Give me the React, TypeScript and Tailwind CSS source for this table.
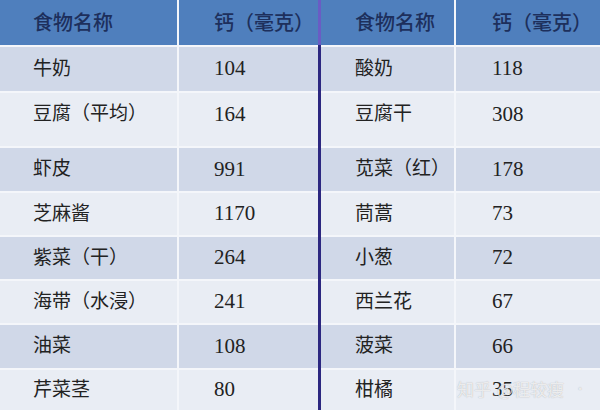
import React from 'react';

const rows: [string, string, string, string, number][] = [
  ['牛奶', '104', '酸奶', '118', 44],
  ['豆腐（平均）', '164', '豆腐干', '308', 53],
  ['虾皮', '991', '苋菜（红）', '178', 43],
  ['芝麻酱', '1170', '茼蒿', '73', 42],
  ['紫菜（干）', '264', '小葱', '72', 42],
  ['海带（水浸）', '241', '西兰花', '67', 42],
  ['油菜', '108', '菠菜', '66', 43],
  ['芹菜茎', '80', '柑橘', '35', 40],
];

const font = { fontFamily: '"Liberation Serif", "Noto Sans CJK SC", serif' };

const Table = ({ side, firstW, padA, padB }: { side: 0 | 1; firstW: string; padA: string; padB: string }) => (
  <div className="flex flex-col gap-y-[2px] bg-[#f4f6fa] flex-1">
    <div className={`grid ${firstW} gap-x-[2px] h-[45px]`}>
      <div className={`bg-[#4f7fbd] flex items-center ${padA} text-[20px] text-[#1d2f5c] font-medium`}>食物名称</div>
      <div className={`bg-[#4f7fbd] flex items-center ${padB} text-[20px] text-[#1d2f5c] font-medium`}>钙（毫克）</div>
    </div>
    {rows.map((r, i) => {
      const bg = i % 2 === 0 ? 'bg-[#d0d8e8]' : 'bg-[#e9edf4]';
      return (
        <div key={i} className={`grid ${firstW} gap-x-[2px]`} style={{ height: r[4] }}>
          <div className={`${bg} flex items-center ${padA} text-[19px] text-[#222]`}>
            <span className={i === 1 ? 'mb-[10px]' : ''}>{side === 0 ? r[0] : r[2]}</span>
          </div>
          <div className={`${bg} flex items-center ${padB} text-[21px] text-[#222]`}>
            <span className={i === 1 ? 'mb-[10px]' : ''}>{side === 0 ? r[1] : r[3]}</span>
          </div>
        </div>
      );
    })}
  </div>
);

export default function App() {
  return (
    <div className="relative w-[600px] h-[410px] overflow-hidden flex bg-white" style={font}>
      <div className="w-[318px] flex">
        <Table side={0} firstW="grid-cols-[177px_1fr]" padA="pl-[33px]" padB="pl-[35px]" />
      </div>
      <div className="w-[3px] flex flex-col">
        <div className="h-[45px] bg-[#6a5cc4]" />
        <div className="flex-1 bg-[#2c2780]" />
      </div>
      <div className="flex-1 flex">
        <Table side={1} firstW="grid-cols-[133px_1fr]" padA="pl-[34px]" padB="pl-[36px]" />
      </div>
      <div
        className="absolute left-[457px] top-[376px] text-[17px] text-white/75 flex items-center gap-[6px]"
        style={{ fontFamily: '"Noto Sans CJK SC", sans-serif', textShadow: '0 0 1px rgba(90,90,90,0.45)' }}
      >
        <span>知乎</span>
        <span>@程较瘦</span>
        <span className="ml-[4px] text-[12px]">·</span>
      </div>
    </div>
  );
}
